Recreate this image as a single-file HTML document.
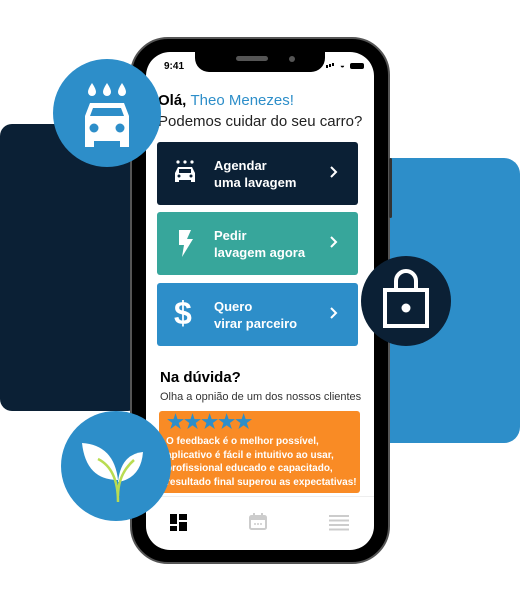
<!DOCTYPE html>
<html><head><meta charset="utf-8"><style>
*{margin:0;padding:0;box-sizing:border-box}
body{width:520px;height:602px;background:#fff;position:relative;overflow:hidden;font-family:"Liberation Sans",sans-serif}
.a{position:absolute}
.btn{position:absolute;left:157px;width:201px;height:63px;border-radius:3px;color:#fff;font-weight:bold;font-size:13px;line-height:17px}
.btn .t{position:absolute;left:57px;top:15px}
.btn .c{position:absolute;left:172px;top:23px}
.btn .i{position:absolute;left:16px;top:17px}
</style></head><body>
<div class="a" style="left:0;top:124px;width:140px;height:287px;background:#0b2035;border-radius:12px"></div>
<div class="a" style="left:380px;top:158px;width:140px;height:285px;background:#2d8ec9;border-radius:0 16px 16px 0"></div>
<div class="a" style="left:130px;top:37px;width:260px;height:527px;background:#000;border-radius:38px;border:2px solid #555"></div>
<div class="a" style="left:127px;top:120px;width:4px;height:30px;background:#333;border-radius:2px"></div>
<div class="a" style="left:389px;top:158px;width:3px;height:60px;background:#333;border-radius:2px"></div>
<div class="a" style="left:146px;top:52px;width:228px;height:498px;background:#fff;border-radius:24px;overflow:hidden">
  <div class="a" style="left:49px;top:-2px;width:130px;height:22px;background:#000;border-radius:0 0 14px 14px"></div>
  <div class="a" style="left:90px;top:4px;width:32px;height:5px;background:#555;border-radius:3px"></div>
  <div class="a" style="left:143px;top:4px;width:6px;height:6px;background:#555;border-radius:3px"></div>
  <div class="a" style="left:18px;top:9px;font-size:10px;font-weight:bold">9:41</div>
  <div class="a" style="left:180px;top:13px;width:2px;height:3px;background:#000;box-shadow:3px -1px 0 #000,6px -2px 0 #000"></div>
  <div class="a" style="left:194px;top:9px;font-size:8px">◒</div>
  <div class="a" style="left:204px;top:11px;width:14px;height:6px;background:#000;border-radius:2px"></div>
  <div class="a" style="left:12px;top:40px;font-size:15px;font-weight:bold;white-space:nowrap">Olá, <span style="font-weight:normal;color:#2d8ec9">Theo Menezes!</span></div>
  <div class="a" style="left:12px;top:61px;font-size:15px;color:#222;white-space:nowrap">Podemos cuidar do seu carro?</div>
  <div class="a" style="left:14px;top:317px;font-size:15px;font-weight:bold">Na dúvida?</div>
  <div class="a" style="left:14px;top:339px;font-size:11px;color:#333;white-space:nowrap">Olha a opnião de um dos nossos clientes</div>
  <div class="a" style="left:13px;top:359px;width:201px;height:82px;background:#f98b25;border-radius:3px;color:#fff;font-weight:bold;font-size:10px;line-height:13.5px;padding:24px 0 0 7px;white-space:nowrap">
    <div class="a" style="left:8px;top:2px;font-size:19px;color:#2d8ec9;letter-spacing:0px;line-height:20px">★★★★★</div>
    O feedback é o melhor possível,<br>aplicativo é fácil e intuitivo ao usar,<br>profissional educado e capacitado,<br>resultado final superou as expectativas!</div>
  <div class="a" style="left:0;top:444px;width:228px;height:1px;background:#eee"></div>
  <svg class="a" style="left:24px;top:462px" width="18" height="18"><rect x="0" y="0" width="7" height="10" fill="#000"/><rect x="9" y="0" width="8" height="6" fill="#000"/><rect x="0" y="12" width="7" height="5" fill="#000"/><rect x="9" y="8" width="8" height="9" fill="#000"/></svg>
  <svg class="a" style="left:103px;top:461px" width="18" height="18"><rect x="1" y="3" width="16" height="13" rx="1.5" fill="none" stroke="#ccc" stroke-width="2"/><rect x="1" y="3" width="16" height="4" fill="#ccc"/><rect x="4" y="0" width="2" height="4" fill="#ccc"/><rect x="12" y="0" width="2" height="4" fill="#ccc"/><circle cx="6" cy="11" r="1" fill="#ccc"/><circle cx="9" cy="11" r="1" fill="#ccc"/><circle cx="12" cy="11" r="1" fill="#ccc"/></svg>
  <svg class="a" style="left:183px;top:463px" width="20" height="16"><g fill="#ccc"><rect y="0" width="20" height="2"/><rect y="4.5" width="20" height="2"/><rect y="9" width="20" height="2"/><rect y="13.5" width="20" height="2"/></g></svg>
</div>
<div class="btn" style="top:142px;background:#0b2035"><svg class="i" width="24" height="26" viewBox="0 0 24 26"><g fill="#fff"><circle cx="5" cy="3" r="1.6"/><circle cx="12" cy="3" r="1.6"/><circle cx="19" cy="3" r="1.6"/><path d="M5 8h14l3 6v9h-4v-2H6v2H2v-9z"/></g><rect x="6" y="10" width="12" height="4" fill="#0b2035"/><circle cx="6" cy="17" r="1.5" fill="#0b2035"/><circle cx="18" cy="17" r="1.5" fill="#0b2035"/></svg><div class="t">Agendar<br>uma lavagem</div><div class="c"><svg width="10" height="14"><path d="M2 2l5 5-5 5" stroke="#fff" stroke-width="2" fill="none"/></svg></div></div>
<div class="btn" style="top:212px;background:#37a69b"><svg class="i" width="24" height="30" viewBox="0 0 24 30" style="top:17px"><path d="M6 1h12l-4 9h6L9 28l2-12H6z" fill="#fff"/></svg><div class="t">Pedir<br>lavagem agora</div><div class="c"><svg width="10" height="14"><path d="M2 2l5 5-5 5" stroke="#fff" stroke-width="2" fill="none"/></svg></div></div>
<div class="btn" style="top:283px;background:#2d8ec9"><div class="a" style="left:17px;top:12px;font-size:32px;line-height:36px">$</div><div class="t">Quero<br>virar parceiro</div><div class="c"><svg width="10" height="14"><path d="M2 2l5 5-5 5" stroke="#fff" stroke-width="2" fill="none"/></svg></div></div>
<svg class="a" style="left:52px;top:58px" width="110" height="110" viewBox="0 0 110 110"><circle cx="55" cy="55" r="54" fill="#2d8ec9"/><g fill="#fff"><path d="M40 25q-4 6-4 9a4 4 0 0 0 8 0q0-3-4-9z"/><path d="M55 25q-4 6-4 9a4 4 0 0 0 8 0q0-3-4-9z"/><path d="M70 25q-4 6-4 9a4 4 0 0 0 8 0q0-3-4-9z"/><path d="M38 45h34l5 13v31h-9v-6H42v6h-9V58z"/></g><path d="M41 50h28l3 8H38z" fill="#2d8ec9"/><circle cx="42" cy="70" r="4.5" fill="#2d8ec9"/><circle cx="68" cy="70" r="4.5" fill="#2d8ec9"/></svg>
<svg class="a" style="left:361px;top:256px" width="90" height="90"><circle cx="45" cy="45" r="45" fill="#0b2035"/><path d="M35 34v-9a10 10 0 0 1 20 0v9" stroke="#fff" stroke-width="4" fill="none"/><rect x="24" y="34" width="42" height="36" fill="none" stroke="#fff" stroke-width="4"/><circle cx="45" cy="52" r="4.5" fill="#fff"/></svg>
<svg class="a" style="left:61px;top:411px" width="110" height="110"><circle cx="55" cy="55" r="55" fill="#2d8ec9"/><path d="M21 32q32 2 36 37q-32 0-36-37z" fill="#fff"/><path d="M82 41q-22 2-25 30q23-4 25-30z" fill="#fff"/><path d="M37 48q20 10 20 43M57 85q0-22 16-36" stroke="#b9dc52" stroke-width="2.5" fill="none"/></svg>
</body></html>
